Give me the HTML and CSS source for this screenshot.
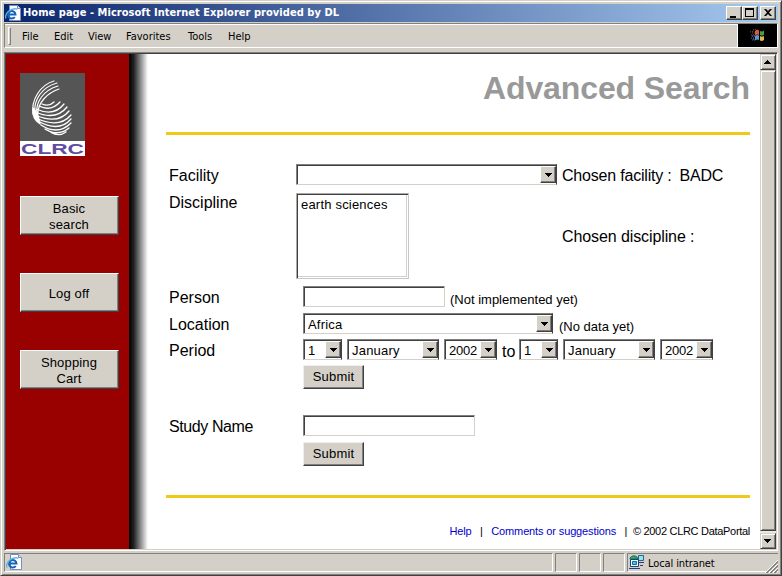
FILE: index.html
```html
<!DOCTYPE html>
<html lang="en">
<head>
<meta charset="utf-8">
<title>Home page</title>
<link rel="stylesheet" href="styles.css">
</head>
<body>
<svg class="defs" width="0" height="0">
  <symbol id="ie" viewBox="0 0 16 16">
    <path d="M4.500 .5h8l3 3v12h-11z" fill="#fff" stroke="#7b8dbd"/>
    <path d="M12.500.5v3h3" fill="#dce6f5" stroke="#7b8dbd"/>
    <path d="M3.500 9.500h7A3.700 3.700 0 1 0 9.800 12" fill="none" stroke="#1763b8" stroke-width="2"/>
    <path d="M1 13.500C-1 9 6 2 12.500 4.200" fill="none" stroke="#55b4e8" stroke-width="1.300"/>
  </symbol>
</svg>
<div class="window">
  <header class="titlebar">
    <svg class="ie"><use href="#ie"/></svg>
    <span class="caption">Home page - Microsoft Internet Explorer provided by DL</span>
    <div class="winbtns">
      <span class="winbtn"><svg width="14" height="12"><path d="M3 9h6v2H3z"/></svg></span>
      <span class="winbtn"><svg width="14" height="12"><path d="M2 1h9v9H2zM3 3v6h7V3z" fill-rule="evenodd"/></svg></span>
      <span class="winbtn close"><svg width="14" height="12"><path d="M3 2h2l2 2 2-2h2L8 5.500 11 9H9L7 7 5 9H3l3-3.500z"/></svg></span>
    </div>
  </header>
  <nav class="menubar">
    <i class="grip"></i>
    <span class="m-file">File</span><span class="m-edit">Edit</span><span class="m-view">View</span><span class="m-fav">Favorites</span><span class="m-tools">Tools</span><span class="m-help">Help</span>
    <svg class="flag" width="39" height="23" viewBox="0 0 39 23">
      <path fill="#000" d="M0 0h39v23H0z"/>
      <g fill="none" stroke-dasharray="1 1"><path d="M12 8l4-1M13 11h3M13 14h4M14 16h3" stroke="#596582"/><path d="M15 6l4-1M14 9h4" stroke="#8a4c38"/><path d="M14 12h4M15 15h3" stroke="#6d95bd"/></g>
      <path d="M17 7q2-2 4-.5v4.500q-2-1-4 .5z" fill="#d45b34"/><path d="M22 7q2 1 4-.5V11q-2 1-4 0z" fill="#4e9b4b"/>
      <path d="M17 12q2-1.500 4-.5V16q-2-1-4 .5z" fill="#5c96d8"/><path d="M22 12q2 1 4 0v4q-2 1.500-4 .5z" fill="#dcbc4a"/>
    </svg>
  </nav>
  <div class="viewport">
    <aside class="sidebar">
      <div class="logo">
        <svg width="65" height="68" viewBox="0 0 65 68" fill="none" stroke="#fff" stroke-linecap="round">
          <path d="M13 41C11 27 20 12 34 8M15 41C13 27 22 14 37 10M17 41C15 29 24 17 38 13M18 40C18 30 27 20 39 16" stroke-width="1.200"/>
          <path d="M22 31Q29 34 34 29M19 33Q31 39 40 29M16 36Q34 44 44 31M15 39Q36 48 47 34M15 42Q38 52 49 38M16 45Q39 56 51 42M18 48Q39 60 51 46M21 52Q38 63 51 50M25 56Q38 64 49 55M31 59.500Q39 64 46 59" stroke-width="1.300"/>
          <path d="M13 34Q10 46 21 52L18 40z" fill="#fff" stroke="none"/>
        </svg>
        <svg class="wordmark" width="65" height="15"><text x="1" y="13" textLength="63" lengthAdjust="spacingAndGlyphs">CLRC</text></svg>
      </div>
      <button class="navbtn">Basic<br>search</button>
      <button class="navbtn">Log off</button>
      <button class="navbtn">Shopping<br>Cart</button>
    </aside>
    <div class="shade"></div>
    <main class="main">
      <h1>Advanced Search</h1>
      <hr>
      <form class="form">
        <div class="row facility"><label>Facility</label><div class="select w261"><span></span><b></b></div><span class="chosen">Chosen facility :<span class="value">BADC</span></span></div>
        <div class="row discipline"><label>Discipline</label><div class="listbox">earth sciences</div><span class="chosen">Chosen discipline :</span></div>
        <div class="row person"><label>Person</label><input class="w142"><span class="note">(Not implemented yet)</span></div>
        <div class="row location"><label>Location</label><div class="select w250">Africa<b></b></div><span class="note">(No data yet)</span></div>
        <div class="row period"><label>Period</label>
          <div class="select day">1<b></b></div><div class="select month">January<b></b></div><div class="select year">2002<b></b></div><span class="to">to</span><div class="select day">1<b></b></div><div class="select month">January<b></b></div><div class="select year">2002<b></b></div>
        </div>
        <div class="row action"><button type="button" class="submit">Submit</button></div>
        <div class="row study"><label>Study Name</label><input class="w172"></div>
        <div class="row action second"><button type="button" class="submit">Submit</button></div>
      </form>
      <hr>
      <footer class="foot"><a class="helplink">Help</a><span class="bar">|</span><a class="comments">Comments or suggestions</a><span class="bar">|</span><span class="copy">© 2002 CLRC DataPortal</span></footer>
    </main>
    <div class="scroll">
      <span class="sbtn"><svg width="12" height="12"><path d="M2 8h7v-1H8V6H7V5H6V4H5v1H4v1H3v1H2z"/></svg></span>
      <span class="thumb"></span>
      <span class="sbtn"><svg width="12" height="12"><path d="M2 4h7v1H8v1H7v1H6v1H5V7H4V6H3V5H2z"/></svg></span>
    </div>
  </div>
  <div class="status">
    <div class="cell wide"><svg class="ie"><use href="#ie"/></svg></div>
    <div class="cell"></div><div class="cell"></div><div class="cell"></div>
    <div class="cell zone">
      <svg width="17" height="16" viewBox="0 0 17 16"><path d="M2 4q3-4 7-1l1 2H2z" fill="#36a853" stroke="#176"/><path d="M10.500 1.500h5v5h-5z" fill="#8de5f0" stroke="#355f8c"/><path d="M2.500 5.500h8v7h-8z" fill="#e7faff" stroke="#233d80"/><path d="M4.500 7.500h4v3h-4z" fill="#35cbe6" stroke="#269"/><path d="M1 14.500h11M11 8.500h5M12 11.500h3" stroke="#233d80"/></svg>
      <span>Local intranet</span>
      <svg class="size" width="14" height="14"><path d="M1 14L14 1M5 14l9-9M9 14l5-5" stroke="#fff"/><path d="M2 14L14 2M3 14L14 3M6 14l8-8M7 14l7-7M10 14l4-4M11 14l3-3" stroke="#86837c"/></svg>
    </div>
  </div>
</div>
</body>
</html>
```
FILE: styles.css
```css
* { box-sizing: border-box; }
body { margin: 0; width: 782px; height: 576px; overflow: hidden; background: #d4d0c8; color: #000; font: 13px "Liberation Sans", sans-serif; }
.defs { position: absolute; }
.window { width: 782px; height: 576px; padding: 3px 2px 0 3px; border: 1px solid #d4d0c8; border-right-color: #404040; border-bottom-color: #404040; box-shadow: inset 1px 1px #fff, inset -1px -1px #808080; }
.titlebar { display: flex; align-items: center; width: 774px; height: 18px; background: linear-gradient(90deg, #0a246a, #a6caf0); }
.ie { flex: none; width: 16px; height: 16px; margin-left: 1px; }
.caption { margin-left: 2px; color: #fff; font: bold 11px/18px "DejaVu Sans Condensed", "DejaVu Sans", sans-serif; font-stretch: condensed; letter-spacing: .04px; white-space: nowrap; }
.winbtns { display: flex; margin-left: auto; margin-right: 2px; }
.winbtn { width: 16px; height: 14px; background: #d4d0c8; border: 1px solid; border-color: #fff #404040 #404040 #fff; box-shadow: inset -1px -1px #808080; }
.winbtn svg { display: block; }
.close { margin-left: 2px; }
.menubar { display: flex; align-items: center; width: 774px; height: 25px; margin-top: 1px; border: 1px solid; border-color: #808080 #fff #fff #808080; box-shadow: inset 0 1px #fff; font: 11px/22px "DejaVu Sans Condensed", "DejaVu Sans", sans-serif; font-stretch: condensed; }
.grip { width: 3px; height: 18px; margin-left: 3px; border: 1px solid; border-color: #fff #808080 #808080 #fff; }
.menubar span { padding-top: 2px; white-space: nowrap; }
.m-file { width: 32px; margin-left: 11px; }
.m-edit { width: 34px; }
.m-view { width: 38px; }
.m-fav { width: 62px; }
.m-tools { width: 40px; }
.flag { margin-left: auto; box-shadow: -1px 0 #fff; }
.viewport { display: flex; width: 774px; height: 499px; margin-top: 4px; border: 1px solid; border-color: #808080 #fff #fff #808080; box-shadow: inset 1px 1px #404040, inset -1px -1px #d4d0c8; padding: 1px; background: #fff; }
.sidebar { width: 123px; background: #900; padding: 19px 10px 0 14px; }
.logo { width: 65px; height: 83px; background: #555; margin-bottom: 40px; }
.logo svg { display: block; }
.wordmark { background: #fff; fill: #604ba0; font: bold 14px "Liberation Sans", sans-serif; }
.navbtn { display: block; width: 99px; height: 39px; margin: 0 0 38px; padding: 2px 1px 0 0; background: #d4d0c8; border: 1px solid; border-color: #fff #404040 #404040 #fff; box-shadow: inset -1px -1px #808080; font: 13px/16px "Liberation Sans", sans-serif; letter-spacing: .15px; color: #000; }
.shade { width: 19px; background: linear-gradient(90deg, #000, #222 25%, #fff); }
.main { width: 612px; padding: 16px 10px 0 18px; }
h1 { margin: 0 0 26px; text-align: right; font: bold 32px/36px "Liberation Sans", sans-serif; letter-spacing: -.1px; color: #999; }
hr { height: 3px; margin: 0; border: 0; background: #f0c818; }
.form { height: 360px; padding: 29px 0 0 3px; }
.row { display: flex; height: 21px; }
label { width: 134px; flex: none; font-size: 16px; line-height: 24px; }
.facility label, .discipline label { width: 127px; }
.study label { letter-spacing: -.4px; }
.chosen { margin-left: 5px; font-size: 16px; line-height: 24px; letter-spacing: -.2px; white-space: pre; }
.discipline .chosen { margin-left: 153px; line-height: 88px; letter-spacing: -.1px; }
.value { margin-left: 8px; }
.select, input, .listbox { border: 1px solid; border-color: #808080 #d4d0c8 #d4d0c8 #808080; box-shadow: inset 1px 1px #404040; background: #fff; font: 13px/22px "Liberation Sans", sans-serif; letter-spacing: .2px; padding: 0 0 0 4px; height: 21px; }
.select { display: flex; justify-content: space-between; border-right-color: #404040; }
.select b { width: 16px; height: 17px; margin: 1px 0; border: 1px solid; border-color: #fff #404040 #404040 #fff; box-shadow: inset -1px -1px #808080; background: linear-gradient(#000, #000) 4px 6px / 7px 1px no-repeat, linear-gradient(#000, #000) 5px 7px / 5px 1px no-repeat, linear-gradient(#000, #000) 6px 8px / 3px 1px no-repeat, linear-gradient(#000, #000) 7px 9px / 1px 1px no-repeat, #d4d0c8; }
.w261 { width: 261px; }
.w250 { width: 250px; }
.w142 { width: 142px; }
.w172 { width: 172px; }
.discipline { margin-top: 8px; height: 86px; }
.discipline label { line-height: 20px; }
.listbox { width: 113px; height: 86px; line-height: 20px; border-color: #aaa #c8c8c8 #c8c8c8 #aaa; box-shadow: inset 1px 1px #404040, inset -1px -1px #fff, inset -2px -2px #d4d0c8; padding-top: 1px; }
.person { margin-top: 7px; }
.note { margin-left: 5px; line-height: 28px; }
.location { margin-top: 6px; }
.period { margin-top: 5px; }
.location .note { margin-left: 6px; }
.day { width: 39px; margin-right: 5px; }
.month { width: 92px; margin-right: 5px; }
.year { width: 53px; letter-spacing: -.2px; }
.to { width: 22px; padding-left: 5px; font-size: 16px; line-height: 25px; }
.action { margin: 5px 0 0 134px; height: 24px; }
.submit { width: 61px; height: 24px; padding: 0; background: #d4d0c8; border: 1px solid; border-color: #eee #404040 #404040 #eee; box-shadow: inset -1px -1px #808080; font: 13px/20px "Liberation Sans", sans-serif; letter-spacing: .2px; color: #000; }
.study { margin-top: 26px; }
.second { margin-top: 6px; }
.foot { display: flex; justify-content: flex-end; margin-top: 26px; font-size: 11px; line-height: 14px; white-space: nowrap; }
.foot a { color: #00c; }
.helplink { letter-spacing: -.2px; }
.comments { letter-spacing: -.13px; }
.bar { margin: 0 8.5px; }
.bar + .copy { margin-left: -3px; }
.copy { letter-spacing: -.3px; }
.scroll { display: flex; flex-direction: column; width: 16px; background: #ece9e4; }
.sbtn, .thumb { border: 1px solid; border-color: #d4d0c8 #404040 #404040 #d4d0c8; box-shadow: inset 1px 1px #fff, inset -1px -1px #808080; background: #d4d0c8; }
.sbtn { height: 16px; padding: 1px; }
.sbtn svg { display: block; }
.thumb { height: 461px; margin-bottom: auto; }
.status { display: flex; gap: 2px; width: 774px; height: 20px; margin-top: 2px; font: 11px/19px "DejaVu Sans Condensed", "DejaVu Sans", sans-serif; font-stretch: condensed; }
.cell { width: 22px; height: 19px; border: 1px solid; border-color: #808080 #fff #fff #808080; }
.wide { width: 549px; }
.zone { display: flex; flex: 1; border-right: 0; letter-spacing: -.1px; }
.zone span { margin-left: 3px; white-space: nowrap; }
.size { margin: 5px 0 0 auto; }
```
